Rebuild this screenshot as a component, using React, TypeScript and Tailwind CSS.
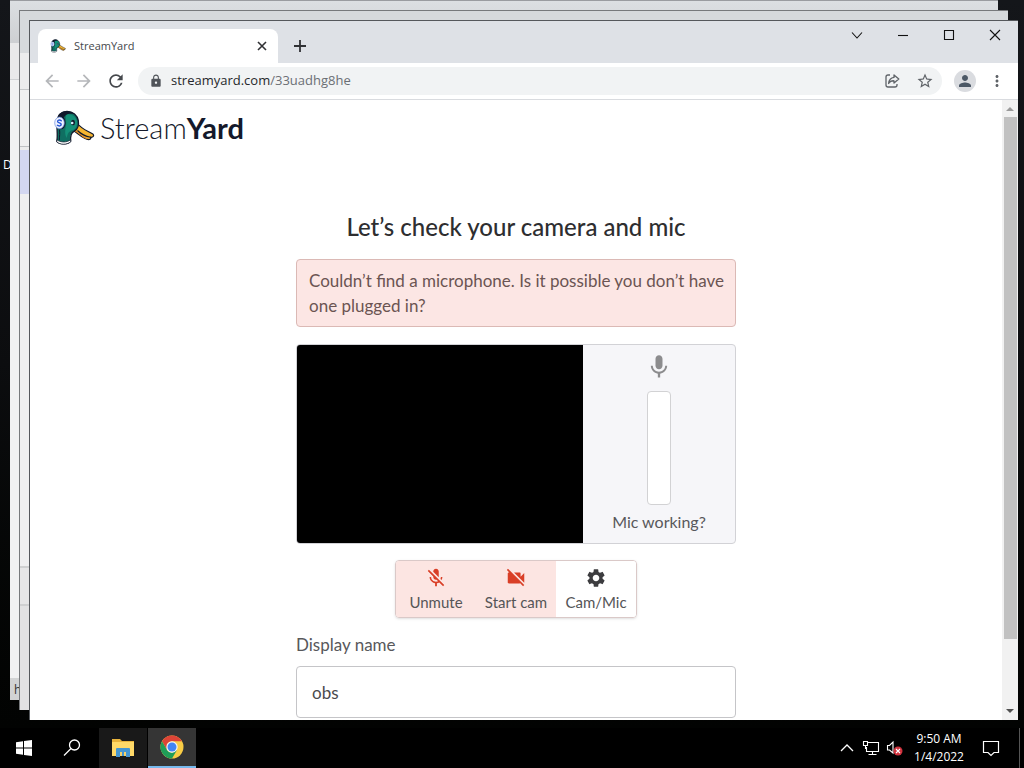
import type { ReactNode } from "react";
import {
  MdArrowBack,
  MdArrowForward,
  MdLock,
  MdMic,
  MdMicOff,
  MdMoreVert,
  MdPerson,
  MdRefresh,
  MdSettings,
  MdStarBorder,
  MdVideocamOff,
} from "react-icons/md";

function Duck({ className }: { className: string }) {
  return (
    <svg viewBox="0 0 42 36" className={className} aria-hidden="true">
      <path d="M19 20.500C25 22 30 30.500 36.500 29.500C37.800 29.200 38 28 37.600 27.200C39.500 27.600 41.500 26.400 40.200 24.200C34 20.500 29 19.500 24.500 13.500Z" fill="#f6b530" stroke="#10182b" strokeWidth="1.200" strokeLinejoin="round" />
      <path d="M20.500 20.800C26 22 30 30 36.500 29C31 27.500 28 24 23 20.500Z" fill="#dd8226" />
      <path d="M24.500 20.500C28 24 33 26.500 37.600 27.300" fill="none" stroke="#10182b" strokeWidth="1.100" />
      <path d="M3.800 12C5 4 9.500 1.300 14 1.300C20 1.300 24.300 5.500 25.300 10.500C26 14.500 25 19.500 21 21.300C18 22.600 17.200 25 17.700 31C15 34.600 7 34.800 3.800 31.300C4.600 27 4.200 23 4 18Z" fill="#0f6f62" stroke="#10182b" strokeWidth="1.300" />
      <path d="M13.500 4.500C19 3.500 23 7 24 11C24.500 15 23 19 19.500 20.300C16 21 14 24 14 28C11.500 25 12 20 13 16C13.800 12 12 8 13.500 4.500Z" fill="#149078" />
      <path d="M3.800 10C5 3 9.500 1 14.500 1.200C17 1.400 19 2.300 20.500 3.800C14 3.200 11 5 10.800 9.500Z" fill="#10182b" />
      <path d="M3.900 29.800C8 32.700 13.500 32.700 17.600 29.800L17.700 31.800C14 35 7 35 3.700 31.800Z" fill="#fff" stroke="#10182b" strokeWidth="0.700" />
      <path d="M6.500 19.500C7 23 6.500 26 6.300 30" fill="none" stroke="#10182b" strokeWidth="1" />
      <ellipse cx="20" cy="12.500" rx="2" ry="2.700" fill="#10182b" />
      <circle cx="19.200" cy="13" r="1.300" fill="#d8f2ff" />
      <ellipse cx="8" cy="12.900" rx="4.600" ry="6.400" fill="#10182b" />
      <ellipse cx="6.500" cy="12.900" rx="4.800" ry="5.800" fill="#eef2ff" stroke="#6f8fe0" strokeWidth="0.700" />
      <path d="M8.300 10.700C6.500 9.300 4.300 10.100 4.600 11.700C4.900 13.100 8 12.700 8.200 14.300C8.300 16 5.900 16.400 4.400 15.300" fill="none" stroke="#2456d6" strokeWidth="1.400" strokeLinecap="round" />
    </svg>
  );
}

function ShareIcon() {
  return (
    <svg viewBox="0 0 16 16" className="size-4" fill="none" stroke="#5f6368" strokeWidth="1.300" strokeLinejoin="round" aria-hidden="true">
      <path d="M6 2H4Q2 2 2 4V12Q2 14 4 14H11Q13 14 13 12V11" />
      <path d="M10 2L14.800 6L10 10V7.800Q6.500 7.500 4.600 10.500Q5.200 5 10 4.400Z" />
    </svg>
  );
}

function BackWindows() {
  return (
    <div aria-hidden="true">
      <div className="absolute top-0 right-[26px] bottom-7 left-[10px] flex flex-col border-t border-[#9a9ca0] bg-[#f1f1f2]">
        <div className="h-[42px] bg-linear-to-b from-[#dcdfe2] to-[#cdcfd2]" />
        <div className="h-[37px] border-b border-[#cfd1d3] bg-[#e9e9ea]" />
        <div className="grow" />
        <div className="h-[22px] bg-[#d2d3d4] pl-1 font-['Open_Sans',sans-serif] text-xs leading-6 text-[#333]">h</div>
      </div>
      <div className="absolute top-[10px] right-4 bottom-[18px] left-[19px] flex flex-col border-t border-l border-[#77797c] bg-[#ececed]">
        <div className="h-[42px] bg-[#d6d9dc]" />
        <div className="h-[37px] border-b border-[#c5c7c9] bg-[#ececed]" />
        <div className="h-[57px] border-b border-[#bfc1c4] bg-[#f0f0f1]" />
        <div className="h-[3px]" />
        <div className="h-11 bg-[#d3d7f1]" />
        <div className="grow bg-[#efeff0]" />
        <div className="h-10 border-t-2 border-b-2 border-[#cfd0d1] bg-[#e6e6e7]" />
        <div className="h-[104px] bg-[#e2e2e3]" />
      </div>
    </div>
  );
}

function TabStrip() {
  return (
    <header className="flex h-[42px] shrink-0 items-start bg-[#dee1e6] text-[#202124]">
      <div className="mt-2 ml-2 flex h-[34px] w-60 items-center rounded-t-lg bg-white pr-2 pl-3">
        <Duck className="h-[14px] w-4" />
        <span className="ml-2 grow text-[11px] text-[#45484c]">StreamYard</span>
        <button aria-label="Close tab" className="flex size-4 items-center justify-center">
          <svg viewBox="0 0 10 10" className="size-[10px]" stroke="#303134" strokeWidth="1.600"><path d="M1 1L9 9M9 1L1 9" /></svg>
        </button>
      </div>
      <button aria-label="New tab" className="mt-[15px] ml-3 flex size-5 items-center justify-center">
        <svg viewBox="0 0 14 14" className="size-[14px]" stroke="#303134" strokeWidth="1.800"><path d="M7 1V13M1 7H13" /></svg>
      </button>
      <div className="ml-auto flex h-7">
        <WindowButton label="Search tabs"><path d="M1 3.500L6 9L11 3.500" /></WindowButton>
        <WindowButton label="Minimize"><path d="M1 6.500H11" /></WindowButton>
        <WindowButton label="Maximize"><path d="M1.500 1.500H10.500V10.500H1.500Z" /></WindowButton>
        <WindowButton label="Close"><path d="M1 1L11 11M11 1L1 11" /></WindowButton>
      </div>
    </header>
  );
}

function WindowButton({ label, children }: { label: string; children: ReactNode }) {
  return (
    <button aria-label={label} className="flex w-[46px] items-center justify-center">
      <svg viewBox="0 0 12 12" className="size-3" fill="none" stroke="#111" strokeWidth="1.100">{children}</svg>
    </button>
  );
}

function Toolbar() {
  return (
    <div className="flex h-[37px] shrink-0 items-center border-b border-[#d9dbdf] bg-white px-3 text-[#5f6368]">
      <button aria-label="Back" className="mr-3 text-[#b5b7ba]"><MdArrowBack className="size-5" /></button>
      <button aria-label="Forward" className="mr-3 text-[#b5b7ba]"><MdArrowForward className="size-5" /></button>
      <button aria-label="Reload" className="mr-3 text-[#45484c]"><MdRefresh className="size-5" /></button>
      <div className="flex h-7 grow items-center rounded-full bg-[#f1f3f4] pr-2 pl-[11px]">
        <MdLock className="size-[14px] text-[#50545a]" />
        <a href="#page" className="ml-2 grow text-[13px] text-[#6b6f74]"><span className="text-[#26282b]">streamyard.com</span>/33uadhg8he</a>
        <button aria-label="Share this page" className="mr-4"><ShareIcon /></button>
        <button aria-label="Bookmark this tab"><MdStarBorder className="size-[18px]" /></button>
      </div>
      <button aria-label="Profile" className="ml-3 flex size-[22px] items-center justify-center rounded-full bg-[#dadce0] text-[#4c5866]"><MdPerson className="size-[18px]" /></button>
      <button aria-label="Menu" className="ml-3"><MdMoreVert className="size-[18px]" /></button>
    </div>
  );
}

function ControlButton({ icon, label, muted = false }: { icon: ReactNode; label: string; muted?: boolean }) {
  return (
    <button className={muted ? "flex w-20 flex-col items-center bg-[#fce5e2] pt-1.5 text-[#d93f27]" : "flex w-20 flex-col items-center bg-white pt-1.5 text-[#3c3c3f]"}>
      {icon}
      <span className="mt-[3px] text-[15px] leading-5 text-[#555557]">{label}</span>
    </button>
  );
}

function Page() {
  return (
    <main id="page" className="min-w-0 grow overflow-hidden bg-white font-[Lato,sans-serif] text-base text-[#58585b]">
      <div className="flex items-center pt-[10px] pl-[23px]">
        <Duck className="h-9 w-[42px]" />
        <span className="ml-[5px] text-[29px] leading-9 font-light text-[#14192b]">Stream<b className="font-bold">Yard</b></span>
      </div>
      <section className="mx-auto mt-[61px] w-full max-w-[440px]">
        <h1 className="text-center text-2xl leading-10 font-medium text-[#2e2e30]">Let’s check your camera and mic</h1>
        <p role="alert" className="mt-3 rounded border border-[#dbb9b5] bg-[#fce6e4] py-2 pr-1 pl-3 text-[17px] leading-[25px] text-[#6b5452]">
          Couldn’t find a microphone. Is it possible you don’t have one plugged in?
        </p>
        <div className="mt-[17px] flex h-[200px] overflow-hidden rounded border border-[#d2d2d6] bg-[#f6f6f9]">
          <div className="grow bg-black" />
          <div className="flex w-[152px] flex-col items-center pt-2">
            <MdMic className="size-7 text-[#8c8c8e]" />
            <div className="mt-[10px] h-[114px] w-6 rounded border border-[#d2d2d4] bg-white" />
            <span className="mt-[5px] leading-6">Mic working?</span>
          </div>
        </div>
        <div className="mx-auto mt-4 flex h-[58px] w-fit overflow-hidden rounded border border-[#dac9c8] shadow">
          <ControlButton muted icon={<MdMicOff className="size-[22px]" />} label="Unmute" />
          <ControlButton muted icon={<MdVideocamOff className="size-[22px]" />} label="Start cam" />
          <ControlButton icon={<MdSettings className="size-[22px]" />} label="Cam/Mic" />
        </div>
        <label htmlFor="display-name" className="mt-[15px] block text-[17px] leading-6">Display name</label>
        <input id="display-name" defaultValue="obs" className="mt-[9px] block h-[52px] w-full rounded border border-[#c5c5c8] px-[15px] text-[17px] text-[#4a4a4d] outline-none" />
      </section>
    </main>
  );
}

function Scrollbar() {
  return (
    <div aria-hidden="true" className="flex w-4 shrink-0 flex-col items-center bg-[#f1f1f1]">
      <svg viewBox="0 0 16 17" className="h-[17px] w-4 shrink-0"><path d="M4 11L8 7L12 11Z" fill="#9a9a9a" /></svg>
      <div className="flex w-[13px] grow flex-col"><div className="h-[89%] bg-[#c1c1c1]" /></div>
      <svg viewBox="0 0 16 17" className="h-[17px] w-4 shrink-0"><path d="M4 6L8 10L12 6Z" fill="#505050" /></svg>
    </div>
  );
}

function ChromeLogo() {
  return (
    <svg viewBox="0 0 24 24" className="size-6" aria-hidden="true">
      <circle cx="12" cy="12" r="11.500" fill="#f9cc45" />
      <path d="M2.040 6.250A11.500 11.500 0 0 1 21.960 6.250H12A5.750 5.750 0 0 0 7 9.100L7 14.900Z" fill="#dc4437" />
      <path d="M2.040 6.250L7 14.900A5.750 5.750 0 0 0 12 17.750L17 14.900L12 23.500A11.500 11.500 0 0 1 2.040 6.250Z" fill="#1f9d58" />
      <circle cx="12" cy="12" r="5.700" fill="#f5f5f5" />
      <circle cx="12" cy="12" r="4.500" fill="#4285f4" />
    </svg>
  );
}

function Taskbar() {
  return (
    <footer className="flex h-10 shrink-0 items-stretch bg-black text-white">
      <button aria-label="Start" className="flex w-12 items-center justify-center">
        <svg viewBox="0 0 16 16" className="size-4" fill="#fff"><path d="M0 2.200L7 1.200V7.500H0ZM8 1L16 0V7.500H8ZM0 8.500H7V14.800L0 13.800ZM8 8.500H16V16L8 15Z" /></svg>
      </button>
      <button aria-label="Search" className="flex w-12 items-center justify-center">
        <svg viewBox="0 0 18 18" className="size-[18px]" fill="none" stroke="#fff" strokeWidth="1.300"><circle cx="11.500" cy="6" r="5" /><path d="M8 9.500L1 16.500" /></svg>
      </button>
      <button aria-label="File Explorer" className="ml-[3px] flex w-12 items-center justify-center bg-[#191919]">
        <svg viewBox="0 0 22 20" className="h-5 w-[22px]"><path d="M0 1H8L10 3H22V18H0Z" fill="#e8b33c" /><path d="M0 4H22V18H0Z" fill="#ffd968" /><path d="M4 19V11Q4 10 5 10H17Q18 10 18 11V19H14V14H8V19Z" fill="#4596d1" /><path d="M8 14H14V18H8Z" fill="#f5d16a" /><path d="M10 14H12V18H10Z" fill="#4596d1" /></svg>
      </button>
      <button aria-label="Chrome" className="ml-px flex w-12 items-center justify-center border-b-2 border-[#76b9ed] bg-[#353535]"><ChromeLogo /></button>
      <div className="ml-auto flex items-center">
        <button aria-label="Show hidden icons" className="flex w-6 justify-center">
          <svg viewBox="0 0 14 8" className="h-2 w-[14px]" fill="none" stroke="#fff" strokeWidth="1.300"><path d="M1 7L7 1L13 7" /></svg>
        </button>
        <button aria-label="Network" className="flex w-6 justify-center">
          <svg viewBox="0 0 18 16" className="h-4 w-[18px]" fill="none" stroke="#fff" strokeWidth="1.100"><path d="M6 2.500H16.500V11.500H4.500V7M10.500 11.500V14.500M6.500 14.500H14.500M1.500 1.500H5.500V5.500H1.500ZM3.500 5.500V9" /></svg>
        </button>
        <button aria-label="Volume" className="flex w-6 justify-center">
          <svg viewBox="0 0 18 16" className="h-4 w-[18px]" fill="none"><path d="M1.500 5.500H3.500L7 2V13L3.500 10H1.500Z" stroke="#fff" strokeWidth="1.100" /><circle cx="12" cy="11" r="4.500" fill="#d1333e" /><path d="M10 9L14 13M14 9L10 13" stroke="#fff" strokeWidth="1.100" /></svg>
        </button>
        <time className="w-16 text-center text-[12px] leading-[18px]">9:50 AM<br />1/4/2022</time>
        <button aria-label="Notifications" className="flex w-10 justify-center">
          <svg viewBox="0 0 18 18" className="size-[18px]" fill="none" stroke="#fff" strokeWidth="1.200"><path d="M1.500 2.500H16.500V13.500H12L9 16.500L6 13.500H1.500Z" /></svg>
        </button>
        <div className="ml-2 h-10 w-[5px] border-l border-[#555]" />
      </div>
    </footer>
  );
}

export default function App() {
  return (
    <div className="flex h-screen flex-col overflow-hidden bg-[#08090a] font-['Open_Sans',sans-serif]">
      <div className="relative grow bg-linear-to-b from-[#14161a] via-[#0c0d0f] to-[#020302]">
        <span className="absolute top-[157px] left-[3px] text-xs text-white">D</span>
        <BackWindows />
        <div className="absolute top-5 right-[6px] bottom-2 left-[29px] flex flex-col border-t border-l border-[#55585c] bg-white">
          <TabStrip />
          <Toolbar />
          <div className="flex min-h-0 grow">
            <Page />
            <Scrollbar />
          </div>
        </div>
      </div>
      <Taskbar />
    </div>
  );
}
